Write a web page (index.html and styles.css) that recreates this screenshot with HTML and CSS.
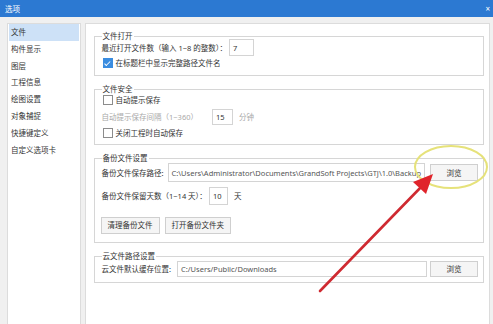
FILE: index.html
```html
<!DOCTYPE html>
<html lang="zh-CN">

<head>
  <meta charset="UTF-8">
  <title>选项</title>
  <link rel="stylesheet" href="styles.css">
</head>

<body>
  <div class="title-bar">
    <span class="title-text">选项</span>
    <span class="title-close">×</span>
  </div>

  <div class="dialog">
    <ul class="side-menu">
      <li class="menu-item active">文件</li>
      <li class="menu-item">构件显示</li>
      <li class="menu-item">图层</li>
      <li class="menu-item">工程信息</li>
      <li class="menu-item">绘图设置</li>
      <li class="menu-item">对象捕捉</li>
      <li class="menu-item">快捷键定义</li>
      <li class="menu-item">自定义选项卡</li>
    </ul>

    <div class="main-panel">
      <fieldset class="group group-open">
        <legend>文件打开</legend>
        <div class="row row-input">
          <span>最近打开文件数（输入 1~8 的整数）：</span>
          <span class="field field-7">7</span>
        </div>
        <div class="row row-check">
          <span class="check checked"></span>
          <span>在标题栏中显示完整路径文件名</span>
        </div>
      </fieldset>

      <fieldset class="group group-safe">
        <legend>文件安全</legend>
        <div class="row row-check tall">
          <span class="check"></span>
          <span>自动提示保存</span>
        </div>
        <div class="row row-input disabled">
          <span>自动提示保存间隔（1~360）</span>
          <span class="field field-15">15</span>
          <span class="unit">分钟</span>
        </div>
        <div class="row row-check tall">
          <span class="check"></span>
          <span>关闭工程时自动保存</span>
        </div>
      </fieldset>

      <fieldset class="group group-backup">
        <legend>备份文件设置</legend>
        <div class="row row-path">
          <span class="label">备份文件保存路径:</span>
          <span class="field field-path">C:\Users\Administrator\Documents\GrandSoft Projects\GTJ\1.0\Backup</span>
          <span class="btn btn-browse">浏览</span>
        </div>
        <div class="row row-path">
          <span>备份文件保留天数（1~14 天）：</span>
          <span class="field field-10">10</span>
          <span class="unit">天</span>
        </div>
        <div class="row row-buttons">
          <span class="btn btn-wide">清理备份文件</span>
          <span class="btn btn-wide">打开备份文件夹</span>
        </div>
      </fieldset>

      <fieldset class="group group-cloud">
        <legend>云文件路径设置</legend>
        <div class="row row-cloud">
          <span class="label">云文件默认缓存位置:</span>
          <span class="field field-cloud">C:/Users/Public/Downloads</span>
          <span class="btn btn-browse">浏览</span>
        </div>
      </fieldset>
    </div>
  </div>

  <!-- annotation drawn over the dialog -->
  <svg class="marks" width="493" height="324" viewBox="0 0 493 324">
    <ellipse cx="451" cy="167" rx="36" ry="21" fill="none" stroke="#e6e27a" stroke-width="2" />
    <line x1="320" y1="291" x2="423" y2="185" stroke="#cf2a31" stroke-width="2.6" stroke-linecap="round" />
    <polygon points="433,174 413,182 426,194" fill="#e0242b" />
  </svg>
</body>

</html>
```

FILE: styles.css
```css
body {
  margin: 0;
  width: 493px;
  height: 324px;
  overflow: hidden;
  position: relative;
  background-color: #f0f0f0;
  font-family: 'Noto Sans', 'Noto Sans CJK SC', sans-serif;
  font-size: 7.5px;
  line-height: 10px;
  color: #333333;
}

.title-bar {
  height: 17px;
  background-color: #2c79d2;
  color: #ffffff;
  display: flex;
  align-items: center;
  justify-content: space-between;
  padding: 0 3px 0 5px;
}

.title-close {
  font-size: 8px;
}

.dialog {
  display: flex;
  gap: 4px;
  padding: 6px 3px 0 7px;
  height: 301px;
}

.side-menu {
  list-style: none;
  margin: 0;
  padding: 0 1px;
  width: 74px;
  background-color: #ffffff;
  border: 1px solid #dcdcdc;
  border-bottom: none;
}

.menu-item {
  height: 16.8px;
  line-height: 16.8px;
  padding-left: 2px;
}

.menu-item.active {
  background-color: #cde1f7; /* selected page */
}

.main-panel {
  flex: 1;
  background-color: #ffffff;
  border: 1px solid #dcdcdc;
  border-bottom: none;
  padding: 9px 5px 0 8px;
  display: flex;
  flex-direction: column;
  gap: 10px;
}

.group {
  margin: 0;
  border: 1px solid #d6d6d6;
  padding: 0 5px 0 7px;
}

.group legend {
  padding: 0 1px;
  margin-left: 0;
  line-height: 6px;
  height: 6px;
}

.row {
  display: flex;
  align-items: center;
  white-space: nowrap;
}

.row-input {
  height: 17px;
}

.row-check {
  height: 14px;
}

.row-check.tall {
  height: 16px;
}

.group-open {
  padding-bottom: 5px;
}

.group-safe {
  padding-bottom: 3px;
}

.group-backup {
  padding-bottom: 7px;
}

.group-cloud {
  padding-bottom: 3px;
}

.check {
  width: 8px;
  height: 8px;
  border: 1px solid #8c8c8c;
  background-color: #ffffff;
  margin: 0 3px 0 1px;
  position: relative;
}

.check.checked {
  background-color: #3b8de0;
  border-color: #3b8de0;
}

.check.checked::after {
  content: "";
  position: absolute;
  left: 2.5px;
  top: 0.5px;
  width: 2px;
  height: 4.5px;
  border: solid #ffffff;
  border-width: 0 1.2px 1.2px 0;
  transform: rotate(45deg);
}

.field {
  background-color: #ffffff;
  border: 1px solid #d4d4d4;
  padding: 0 3px;
  box-sizing: border-box;
  display: flex;
  align-items: center;
  overflow: hidden;
}

.field-7 {
  width: 25px;
  height: 17px;
  margin-left: 2px;
}

.disabled {
  color: #a9a9a9;
}

.disabled .field {
  color: #333333;
}

.field-15 {
  width: 21px;
  height: 16px;
  margin-left: 14px;
}

.unit {
  margin-left: 6px;
}

.row-path {
  height: 23px;
}

.field-path {
  flex: 1;
  height: 19px;
  margin-left: 4px;
  color: #555555;
}

.field-10 {
  width: 19px;
  height: 18px;
  margin-left: 2px;
}

.btn {
  background-color: #f5f5f5;
  border: 1px solid #cfcfcf;
  box-sizing: border-box;
  display: flex;
  align-items: center;
  justify-content: center;
}

.btn-browse {
  width: 48px;
  height: 17px;
  margin-left: 5px;
}

.row-buttons {
  height: 20px;
  margin-top: 8px;
  gap: 5px;
  margin-left: -1px;
}

.btn-wide {
  height: 17px;
  padding: 0 6px;
}

.row-cloud {
  height: 20px;
}

.field-cloud {
  flex: 1;
  height: 16px;
  margin-left: 6px;
  color: #555555;
}

.row-cloud .btn-browse {
  margin-left: 3px;
  height: 16px;
}

.marks {
  position: absolute;
  left: 0;
  top: 0;
  pointer-events: none;
}
```
